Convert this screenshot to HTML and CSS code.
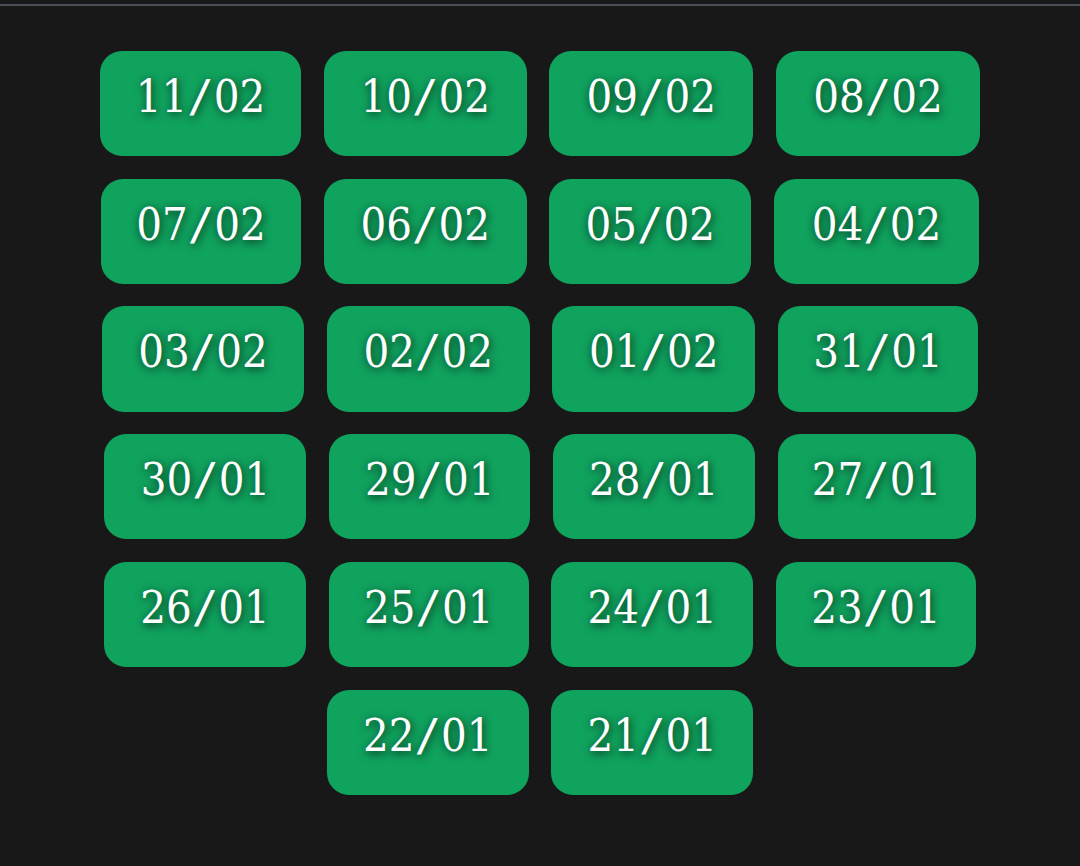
FILE: index.html
```html
<!DOCTYPE html>
<html lang="en">
<head>
    <meta charset="UTF-8">
    <meta name="viewport" content="width=device-width, initial-scale=1.0">
    <title>Dates</title>
    <link rel="stylesheet" href="styles.css">
</head>
<body>
    <hr class="divider">
    <div class="dates">
        <div class="row">
            <a class="date w201">11<span class="slash">/</span>02</a>
            <a class="date w203">10<span class="slash">/</span>02</a>
            <a class="date w204">09<span class="slash">/</span>02</a>
            <a class="date w204">08<span class="slash">/</span>02</a>
        </div>
        <div class="row">
            <a class="date w200">07<span class="slash">/</span>02</a>
            <a class="date w203">06<span class="slash">/</span>02</a>
            <a class="date w202">05<span class="slash">/</span>02</a>
            <a class="date w205">04<span class="slash">/</span>02</a>
        </div>
        <div class="row">
            <a class="date w202">03<span class="slash">/</span>02</a>
            <a class="date w203">02<span class="slash">/</span>02</a>
            <a class="date w203">01<span class="slash">/</span>02</a>
            <a class="date w200">31<span class="slash">/</span>01</a>
        </div>
        <div class="row">
            <a class="date w202">30<span class="slash">/</span>01</a>
            <a class="date w201">29<span class="slash">/</span>01</a>
            <a class="date w202">28<span class="slash">/</span>01</a>
            <a class="date w198">27<span class="slash">/</span>01</a>
        </div>
        <div class="row">
            <a class="date w202">26<span class="slash">/</span>01</a>
            <a class="date w200">25<span class="slash">/</span>01</a>
            <a class="date w202">24<span class="slash">/</span>01</a>
            <a class="date w200">23<span class="slash">/</span>01</a>
        </div>
        <div class="row">
            <a class="date w202">22<span class="slash">/</span>01</a>
            <a class="date w202">21<span class="slash">/</span>01</a>
        </div>
    </div>
</body>
</html>
```
FILE: styles.css
```css
body {
    margin: 0;
    padding-top: 4px;
    background-color: #181818;
    color: white;
}
.divider {
    height: 2px;
    margin: 0;
    border: 0;
    background-color: #495057;
}
.dates {
    display: flex;
    flex-direction: column;
    gap: 22.5px;
    padding-top: 44.9px;
}
.row {
    display: flex;
    justify-content: center;
    gap: 22.7px;
}
.date {
    box-sizing: border-box;
    height: 105.25px;
    padding-top: 16px;
    border-radius: 22px;
    background-color: #10a35e;
    font-family: "DejaVu Serif Condensed", "DejaVu Serif", serif;
    font-stretch: condensed;
    font-size: 45px;
    line-height: 60px;
    text-align: center;
    white-space: nowrap;
    text-shadow: 1px 2px 10px rgba(0,0,0,0.8);
}
.slash {
    font-family: "DejaVu Sans Mono", monospace;
    font-size: 44px;
    line-height: 1;
}
.w198 { width: 198px; }
.w200 { width: 200px; }
.w201 { width: 201px; }
.w202 { width: 202px; }
.w203 { width: 203px; }
.w204 { width: 204px; }
.w205 { width: 205px; }
```
